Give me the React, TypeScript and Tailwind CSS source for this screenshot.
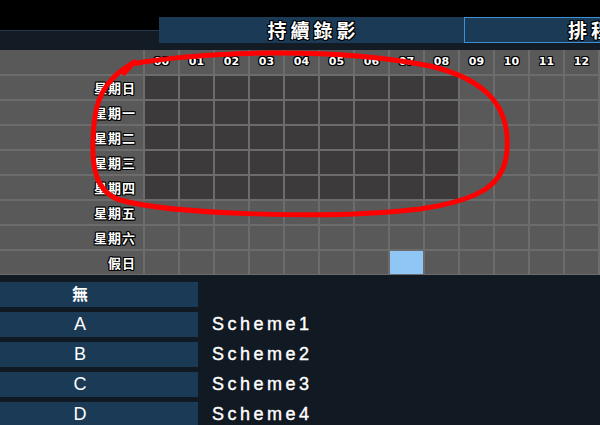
import React from 'react';

const days = ['星期日', '星期一', '星期二', '星期三', '星期四', '星期五', '星期六', '假日'];
const hours = ['00', '01', '02', '03', '04', '05', '06', '07', '08', '09', '10', '11', '12'];
const schemes = [
  { key: '無', name: '' },
  { key: 'A', name: 'Scheme1' },
  { key: 'B', name: 'Scheme2' },
  { key: 'C', name: 'Scheme3' },
  { key: 'D', name: 'Scheme4' },
];

const outline = '[text-shadow:-1px_0_0_#000,1px_0_0_#000,0_-1px_0_#000,0_1px_0_#000,1px_1px_0_#000,-1px_-1px_0_#000,1px_-1px_0_#000,-1px_1px_0_#000]';

const cellColor = (row: number, col: number) => {
  if (row <= 4 && col <= 8) return 'bg-[#3c3a3b]';
  if (row === 7 && col === 7) return 'bg-[#90c6f6]';
  return 'bg-[#595959]';
};

export default function App() {
  return (
    <div className="relative w-[600px] h-[425px] overflow-hidden bg-[#111922] font-['Liberation_Sans','Noto_Sans_CJK_TC',sans-serif]">
      {/* top bar */}
      <div className="flex h-[50px]">
        <div className="w-[159px] shrink-0 flex flex-col">
          <div className="h-[31px] bg-black border-b border-[#22384f]" />
          <div className="flex-1 bg-[#131b25]" />
        </div>
        <div className="flex-1 flex flex-col min-w-0">
          <div className="h-[17px] bg-black" />
          <div className="h-[26px] flex overflow-hidden">
            <div className={`w-[305px] shrink-0 bg-[#1a3a56] flex items-center justify-center pl-[4px] text-white text-[19px] font-bold tracking-[4px] font-['Noto_Sans_CJK_TC',sans-serif] ${outline}`}>
              持續錄影
            </div>
            <div className={`w-[300px] shrink-0 bg-[#1a3a56] border border-[#3d8fd6] flex items-center justify-center text-white text-[19px] font-bold tracking-[4px] font-['Noto_Sans_CJK_TC',sans-serif] ${outline}`}>
              排程錄影
            </div>
          </div>
          <div className="flex-1 bg-[#131b25]" />
        </div>
      </div>

      {/* schedule grid */}
      <div className="grid grid-cols-[143px_repeat(13,33px)] grid-rows-[24px_repeat(8,23px)] gap-[2px] bg-[#6c6c6c] pb-[1px]">
        <div className="bg-[#595959]" />
        {hours.map((h) => (
          <div key={h} className={`bg-[#595959] flex items-center justify-center text-white text-[11px] font-bold font-['DejaVu_Sans',sans-serif] ${outline}`}>
            {h}
          </div>
        ))}
        {days.map((d, r) => (
          <React.Fragment key={d}>
            <div className={`bg-[#595959] flex items-center justify-end pr-[7px] text-white text-[13px] font-bold tracking-[1px] font-['Noto_Sans_CJK_TC',sans-serif] ${outline}`}>
              {d}
            </div>
            {hours.map((h, c) => (
              <div key={h} className={cellColor(r, c)} />
            ))}
          </React.Fragment>
        ))}
      </div>

      {/* scheme list */}
      <div className="flex flex-col gap-[5px] pt-[7px]">
        {schemes.map((s) => (
          <div key={s.key} className="flex items-center h-[25px]">
            <div className="w-[198px] h-full bg-[#1a3a56] flex items-center justify-center pr-[38px] text-white text-[18px] font-['Liberation_Sans','Noto_Sans_CJK_TC',sans-serif]">
              {s.key === '無' ? <span className="text-[16px] font-bold">{s.key}</span> : s.key}
            </div>
            <div className="pl-[14px] text-white text-[18px] tracking-[3.5px] [-webkit-text-stroke:0.4px_#fff]">{s.name}</div>
          </div>
        ))}
      </div>

      {/* hand-drawn annotation */}
      <svg className="absolute inset-0 pointer-events-none" width="600" height="425" viewBox="0 0 600 425">
        <path
          d="M 131 64 C 200 52, 330 46, 430 66 C 490 80, 510 110, 507 150 C 505 185, 480 200, 420 209 C 330 220, 170 214, 120 200 C 95 192, 92 165, 93 140 C 94 110, 98 88, 122 70 L 131 64 M 124 73 L 134 62"
          fill="none"
          stroke="#ff0000"
          strokeWidth="5"
          strokeLinecap="round"
          strokeLinejoin="round"
        />
      </svg>
    </div>
  );
}
